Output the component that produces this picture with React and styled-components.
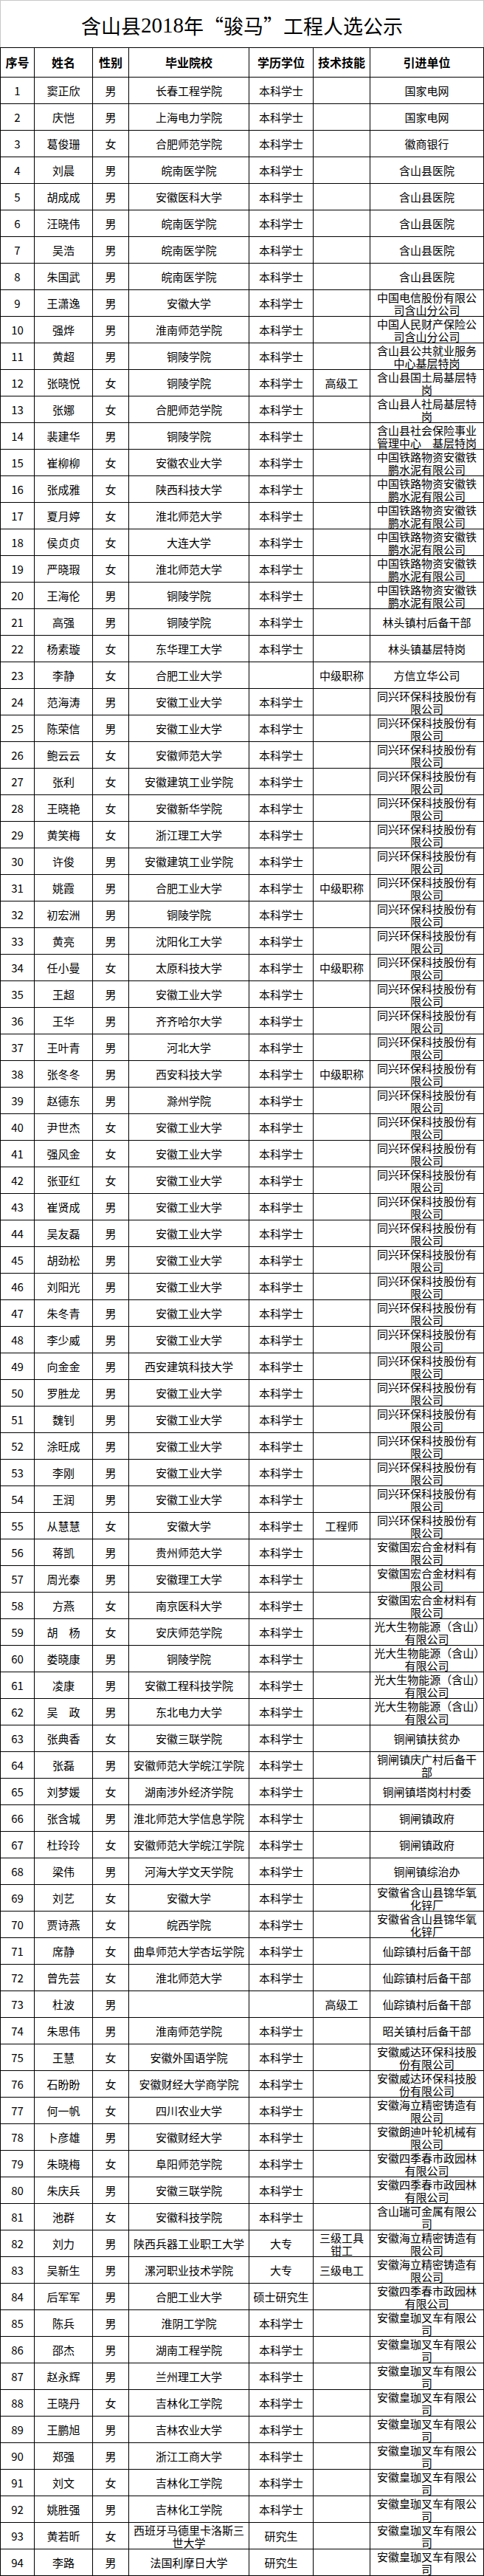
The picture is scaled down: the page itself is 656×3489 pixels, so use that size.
import styled, { createGlobalStyle } from "styled-components";

const GlobalStyle = createGlobalStyle`
  * {
    box-sizing: border-box;
  }

  body {
    margin: 0;
    background: #fff;
    color: #000;
    font-family: "Noto Sans CJK SC", sans-serif;
  }
`;

const COLUMNS = "46px 79px 49px 163px 87px 77px 154px";

const Page = styled.div`
  width: 656px;
  background: #fff;
`;

const Title = styled.h1`
  margin: 0;
  height: 64px;
  display: flex;
  align-items: center;
  justify-content: center;
  padding-top: 4px;
  border: 1px solid #c8c8c8;
  border-bottom: none;
  font-family: "Noto Sans CJK SC", sans-serif;
  font-size: 27px;
  font-weight: 400;
  letter-spacing: 0;
`;

const Year = styled.span`
  font-family: "Liberation Serif", serif;
  font-size: 29px;
`;

const Table = styled.div`
  border-top: 1px solid #000;
  border-left: 1px solid #000;
`;

const Row = styled.div`
  display: grid;
  grid-template-columns: ${COLUMNS};
  height: ${(p) => (p.$head ? 40 : 36)}px;
  border-bottom: 1px solid #000;
`;

const Cell = styled.div`
  display: flex;
  align-items: center;
  justify-content: center;
  padding: 0 4px;
  border-right: 1px solid #000;
  text-align: center;
  font-size: ${(p) => (p.$head ? 16 : 15)}px;
  font-weight: ${(p) => (p.$head ? 700 : 400)};
  line-height: 17px;
  overflow: hidden;
`;

const HEAD = ["序号", "姓名", "性别", "毕业院校", "学历学位", "技术技能", "引进单位"];

const BK = "本科学士";
const TX = "同兴环保科技股份有限公司";
const TL = "中国铁路物资安徽铁鹏水泥有限公司";
const GH = "安徽国宏合金材料有限公司";
const GD = "光大生物能源（含山）有限公司";
const HJ = "安徽皇珈叉车有限公司";
const SJ = "安徽四季春市政园林有限公司";
const HL = "安徽海立精密铸造有限公司";
const WD = "安徽威达环保科技股份有限公司";
const JH = "安徽省含山县锦华氧化锌厂";
const XZ = "仙踪镇村后备干部";
const YY = "含山县医院";
const AG = "安徽工业大学";

const people = [
  ["窦正欣", "男", "长春工程学院", BK, "", "国家电网"],
  ["庆恺", "男", "上海电力学院", BK, "", "国家电网"],
  ["葛俊珊", "女", "合肥师范学院", BK, "", "徽商银行"],
  ["刘晨", "男", "皖南医学院", BK, "", YY],
  ["胡成成", "男", "安徽医科大学", BK, "", YY],
  ["汪晓伟", "男", "皖南医学院", BK, "", YY],
  ["吴浩", "男", "皖南医学院", BK, "", YY],
  ["朱国武", "男", "皖南医学院", BK, "", YY],
  ["王潇逸", "男", "安徽大学", BK, "", "中国电信股份有限公司含山分公司"],
  ["强烨", "男", "淮南师范学院", BK, "", "中国人民财产保险公司含山分公司"],
  ["黄超", "男", "铜陵学院", BK, "", "含山县公共就业服务中心基层特岗"],
  ["张晓悦", "女", "铜陵学院", BK, "高级工", "含山县国土局基层特岗"],
  ["张娜", "女", "合肥师范学院", BK, "", "含山县人社局基层特岗"],
  ["裴建华", "男", "铜陵学院", BK, "", "含山县社会保险事业管理中心　基层特岗"],
  ["崔柳柳", "女", "安徽农业大学", BK, "", TL],
  ["张成雅", "女", "陕西科技大学", BK, "", TL],
  ["夏月婷", "女", "淮北师范大学", BK, "", TL],
  ["侯贞贞", "女", "大连大学", BK, "", TL],
  ["严晓瑕", "女", "淮北师范大学", BK, "", TL],
  ["王海伦", "男", "铜陵学院", BK, "", TL],
  ["高强", "男", "铜陵学院", BK, "", "林头镇村后备干部"],
  ["杨素璇", "女", "东华理工大学", BK, "", "林头镇基层特岗"],
  ["李静", "女", "合肥工业大学", "", "中级职称", "方信立华公司"],
  ["范海涛", "男", AG, BK, "", TX],
  ["陈荣信", "男", AG, BK, "", TX],
  ["鲍云云", "女", "安徽师范大学", BK, "", TX],
  ["张利", "女", "安徽建筑工业学院", BK, "", TX],
  ["王晓艳", "女", "安徽新华学院", BK, "", TX],
  ["黄笑梅", "女", "浙江理工大学", BK, "", TX],
  ["许俊", "男", "安徽建筑工业学院", BK, "", TX],
  ["姚霞", "男", "合肥工业大学", BK, "中级职称", TX],
  ["初宏洲", "男", "铜陵学院", BK, "", TX],
  ["黄亮", "男", "沈阳化工大学", BK, "", TX],
  ["任小曼", "女", "太原科技大学", BK, "中级职称", TX],
  ["王超", "男", AG, BK, "", TX],
  ["王华", "男", "齐齐哈尔大学", BK, "", TX],
  ["王叶青", "男", "河北大学", BK, "", TX],
  ["张冬冬", "男", "西安科技大学", BK, "中级职称", TX],
  ["赵德东", "男", "滁州学院", BK, "", TX],
  ["尹世杰", "女", AG, BK, "", TX],
  ["强风金", "女", AG, BK, "", TX],
  ["张亚红", "女", AG, BK, "", TX],
  ["崔贤成", "男", AG, BK, "", TX],
  ["吴友磊", "男", AG, BK, "", TX],
  ["胡劲松", "男", AG, BK, "", TX],
  ["刘阳光", "男", AG, BK, "", TX],
  ["朱冬青", "男", AG, BK, "", TX],
  ["李少威", "男", AG, BK, "", TX],
  ["向金金", "男", "西安建筑科技大学", BK, "", TX],
  ["罗胜龙", "男", AG, BK, "", TX],
  ["魏钊", "男", AG, BK, "", TX],
  ["涂旺成", "男", AG, BK, "", TX],
  ["李刚", "男", AG, BK, "", TX],
  ["王润", "男", AG, BK, "", TX],
  ["从慧慧", "女", "安徽大学", BK, "工程师", TX],
  ["蒋凯", "男", "贵州师范大学", BK, "", GH],
  ["周光泰", "男", "安徽理工大学", BK, "", GH],
  ["方燕", "女", "南京医科大学", BK, "", GH],
  ["胡　杨", "女", "安庆师范学院", BK, "", GD],
  ["娄晓康", "男", "铜陵学院", BK, "", GD],
  ["凌康", "男", "安徽工程科技学院", BK, "", GD],
  ["吴　政", "男", "东北电力大学", BK, "", GD],
  ["张典香", "女", "安徽三联学院", BK, "", "铜闸镇扶贫办"],
  ["张磊", "男", "安徽师范大学皖江学院", BK, "", "铜闸镇庆广村后备干部"],
  ["刘梦媛", "女", "湖南涉外经济学院", BK, "", "铜闸镇塔岗村村委"],
  ["张含城", "男", "淮北师范大学信息学院", BK, "", "铜闸镇政府"],
  ["杜玲玲", "女", "安徽师范大学皖江学院", BK, "", "铜闸镇政府"],
  ["梁伟", "男", "河海大学文天学院", BK, "", "铜闸镇综治办"],
  ["刘艺", "女", "安徽大学", BK, "", JH],
  ["贾诗燕", "女", "皖西学院", BK, "", JH],
  ["席静", "女", "曲阜师范大学杏坛学院", BK, "", XZ],
  ["曾先芸", "女", "淮北师范大学", BK, "", XZ],
  ["杜波", "男", "", "", "高级工", XZ],
  ["朱思伟", "男", "淮南师范学院", BK, "", "昭关镇村后备干部"],
  ["王慧", "女", "安徽外国语学院", BK, "", WD],
  ["石盼盼", "女", "安徽财经大学商学院", BK, "", WD],
  ["何一帆", "女", "四川农业大学", BK, "", HL],
  ["卜彦雄", "男", "安徽财经大学", BK, "", "安徽朗迪叶轮机械有限公司"],
  ["朱晓梅", "女", "阜阳师范学院", BK, "", SJ],
  ["朱庆兵", "男", "安徽三联学院", BK, "", SJ],
  ["池群", "女", "安徽科技学院", BK, "", "含山瑞可金属有限公司"],
  ["刘力", "男", "陕西兵器工业职工大学", "大专", "三级工具钳工", HL],
  ["吴新生", "男", "漯河职业技术学院", "大专", "三级电工", HL],
  ["后军军", "男", "合肥工业大学", "硕士研究生", "", SJ],
  ["陈兵", "男", "淮阴工学院", BK, "", HJ],
  ["邵杰", "男", "湖南工程学院", BK, "", HJ],
  ["赵永辉", "男", "兰州理工大学", BK, "", HJ],
  ["王晓丹", "女", "吉林化工学院", BK, "", HJ],
  ["王鹏旭", "男", "吉林农业大学", BK, "", HJ],
  ["郑强", "男", "浙江工商大学", BK, "", HJ],
  ["刘文", "女", "吉林化工学院", BK, "", HJ],
  ["姚胜强", "男", "吉林化工学院", BK, "", HJ],
  ["黄若昕", "女", "西班牙马德里卡洛斯三世大学", "研究生", "", HJ],
  ["李路", "男", "法国利摩日大学", "研究生", "", HJ],
];

function App() {
  return (
    <Page>
      <GlobalStyle />
      <Title>
        含山县<Year>2018</Year>年“骏马”工程人选公示
      </Title>
      <Table>
        <Row $head>
          {HEAD.map((h) => (
            <Cell $head key={h}>
              {h}
            </Cell>
          ))}
        </Row>
        {people.map((p, i) => (
          <Row key={i}>
            <Cell>{i + 1}</Cell>
            {p.map((v, j) => (
              <Cell key={j}>{v}</Cell>
            ))}
          </Row>
        ))}
      </Table>
    </Page>
  );
}

export default App;
